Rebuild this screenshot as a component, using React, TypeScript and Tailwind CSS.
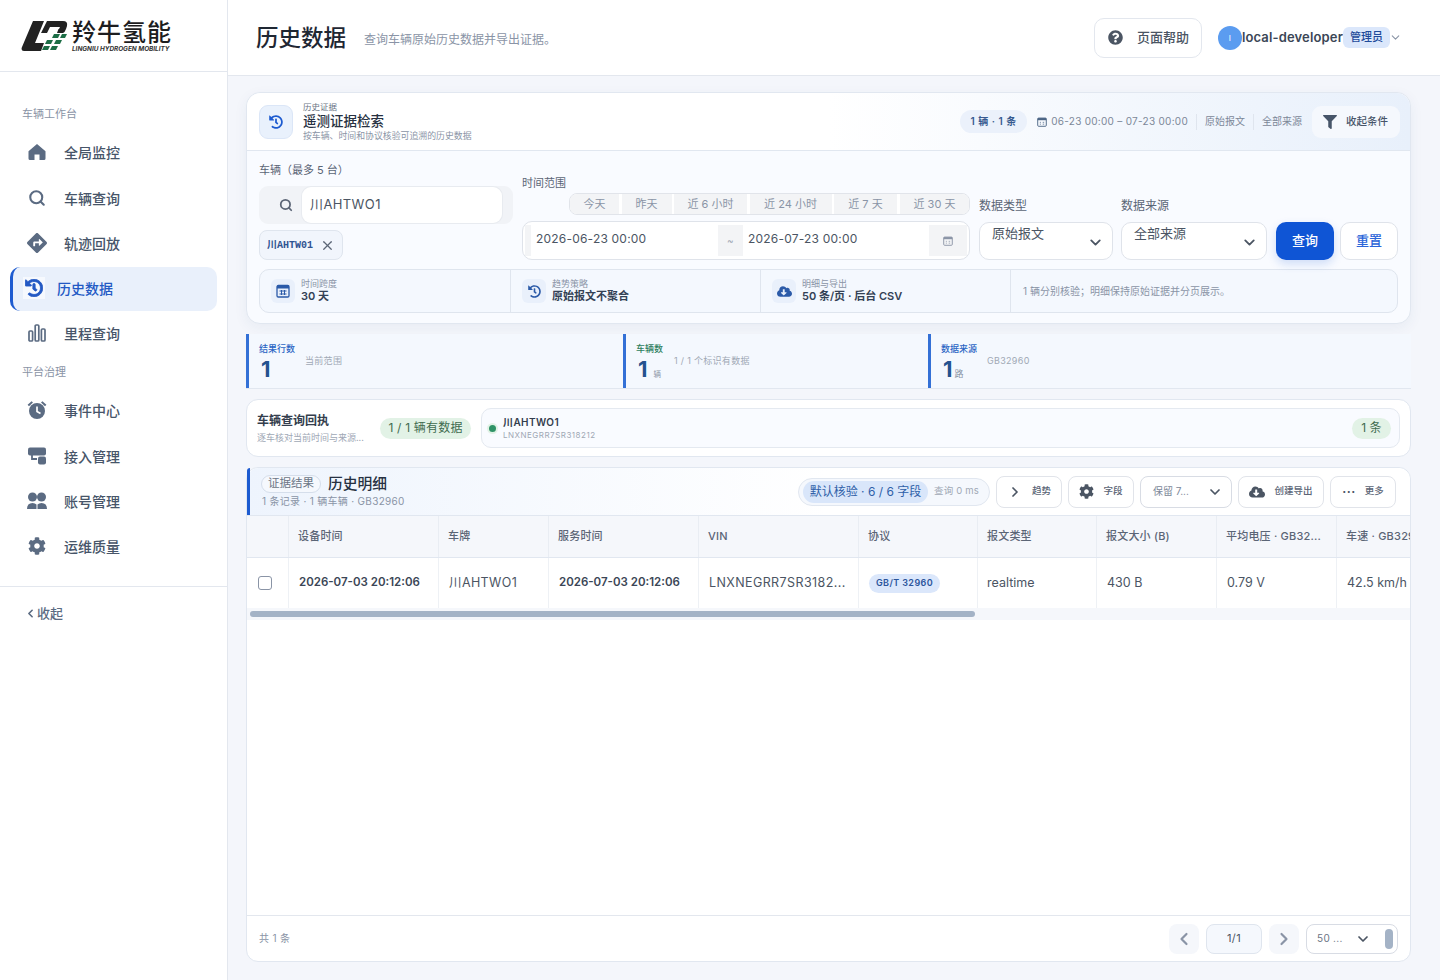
import {
  FaDirections,
  FaHistory,
  FaCog,
  FaQuestionCircle,
  FaFilter,
  FaCloudDownloadAlt,
} from "react-icons/fa";
import { FiChevronDown, FiChevronLeft, FiChevronRight, FiX, FiSearch } from "react-icons/fi";
import type { ReactNode } from "react";

function HomeIcon() {
  return (
    <svg width="20" height="20" viewBox="0 0 20 20" fill="#5b6b82">
      <path d="M10 2 18.500 9.200V16.500a1.500 1.500 0 0 1-1.500 1.500H12.500V12.500h-5V18H3a1.500 1.500 0 0 1-1.500-1.500V9.200z" />
    </svg>
  );
}

function BarsIcon() {
  return (
    <svg width="18" height="18" viewBox="0 0 18 18" fill="none" stroke="#5b6b82" strokeWidth="1.7">
      <rect x="1" y="7" width="3.6" height="10" rx="1" />
      <rect x="7.2" y="1" width="3.6" height="16" rx="1" />
      <rect x="13.4" y="5" width="3.6" height="12" rx="1" />
    </svg>
  );
}

function AlarmIcon() {
  return (
    <svg width="20" height="20" viewBox="0 0 20 20" fill="#5b6b82">
      <circle cx="10" cy="11" r="8" />
      <path d="M0.600 4.800 4.600 1.200 6 2.600 2 6.200zM19.400 4.800 15.400 1.200 14 2.600 18 6.200z" />
      <path d="M10 6.500V11.500L13.500 13.500" fill="none" stroke="#fff" strokeWidth="1.7" />
    </svg>
  );
}

function AccessIcon() {
  return (
    <svg width="20" height="20" viewBox="0 0 20 20" fill="#5b6b82">
      <rect x="1" y="1.500" width="18" height="8" rx="2" />
      <path d="M5 9v4h5" fill="none" stroke="#5b6b82" strokeWidth="1.8" />
      <rect x="11" y="10.500" width="8" height="8" rx="2" />
    </svg>
  );
}

function PeopleIcon() {
  return (
    <svg width="20" height="18" viewBox="0 0 20 18" fill="#5b6b82">
      <circle cx="5.500" cy="5" r="4.500" />
      <circle cx="14.500" cy="5" r="4.500" />
      <path d="M0 17q0-6 5.500-6 2.500 0 4 1.500V17zM20 17q0-6-5.500-6-2.500 0-4 1.500V17z" />
    </svg>
  );
}

function CalendarIcon({ size, solid }: { size: number; solid?: boolean }) {
  return (
    <svg width={size} height={size} viewBox="0 0 14 14" fill="none" stroke="currentColor" strokeWidth="1.300">
      <rect x="1" y="1.500" width="12" height="11.500" rx="1.300" />
      <rect x="1" y="1.500" width="12" height="3" fill="currentColor" stroke="none" />
      {solid ? (
        <path d="M3.500 7h7M3.500 10h7M5.500 6v5M8.500 6v5" strokeWidth="1" />
      ) : (
        <path d="M4 7.500h1.500M8 7.500h2M4 10h1.500M8 10h2" strokeWidth="1" />
      )}
    </svg>
  );
}

function Logo() {
  return (
    <div className="flex items-center">
      <svg width="47" height="32" viewBox="0 0 47 32" className="shrink-0">
        <path d="M12 1h11L14 23h9l-3 8H3q-3.500 0-2-4z" fill="#222" />
        <path d="M26 1h16q5 0 4 5l-1 3q-1 3-3 4h-6l1.500-4h0.500l1-2H29l-3 6h-6z" fill="#222" />
        <path d="M33 14h6l-2 4h-6zM41 14h5l-2 4h-5zM26 20h6l-2 4h-6zM35 20h6l-2 4h-6zM23 26h6l-2 4h-6zM31 26h6l-2 4h-6z" fill="#1c6e46" />
      </svg>
      <div className="ml-[4px] flex flex-col">
        <span className="pt-[1px] text-[24px] leading-[26px] font-medium tracking-[1px] text-[#1d1d1f]">羚牛氢能</span>
        <span className="text-[6.400px] leading-[7px] font-bold whitespace-nowrap text-[#333] italic">LINGNIU HYDROGEN MOBILITY</span>
      </div>
    </div>
  );
}

const workbench = [
  { label: "全局监控", icon: <HomeIcon /> },
  { label: "车辆查询", icon: <FiSearch size={18} strokeWidth={2.8} /> },
  { label: "轨迹回放", icon: <FaDirections size={20} /> },
  { label: "历史数据", icon: <FaHistory size={18} stroke="currentColor" strokeWidth={24} />, active: true },
  { label: "里程查询", icon: <BarsIcon /> },
];

const governance = [
  { label: "事件中心", icon: <AlarmIcon /> },
  { label: "接入管理", icon: <AccessIcon /> },
  { label: "账号管理", icon: <PeopleIcon /> },
  { label: "运维质量", icon: <FaCog size={18} /> },
];

function NavItem({ label, icon, active }: { label: string; icon: ReactNode; active?: boolean }) {
  if (active) {
    return (
      <div className="mx-[10px] mt-[1px] mb-[-1px] flex h-[44px] items-center rounded-[10px] border-l-[3px] border-[#1d5bd0] bg-[#e9f0fb] pb-[2px] pl-[10px] text-[14px] font-medium text-[#2359c4]">
        <span className="flex h-[22px] w-[22px] items-center justify-center bg-[#f6f9fe]">{icon}</span>
        <span className="ml-[12px]">{label}</span>
      </div>
    );
  }
  return (
    <div className="flex h-[44px] items-center pl-[27px] text-[14px] font-medium text-[#475569]">
      <span className="flex w-[20px] justify-center text-[#5b6b82]">{icon}</span>
      <span className="ml-[17px]">{label}</span>
    </div>
  );
}

function Sidebar() {
  return (
    <aside className="flex h-[980px] w-[228px] shrink-0 flex-col border-r border-[#e3e7ee] bg-white">
      <div className="flex h-[72px] items-center border-b border-[#e3e7ee] pl-[21px]">
        <Logo />
      </div>
      <div className="pt-[34px]">
        <div className="pl-[22px] text-[11px] leading-[16px] text-[#8a94a6]">车辆工作台</div>
        <div className="mt-[8px] flex flex-col gap-[1px]">
          {workbench.map((item) => (
            <div key={item.label} className="first:mb-[1px]">
              <NavItem {...item} />
            </div>
          ))}
        </div>
        <div className="mt-[9px] pl-[22px] text-[11px] leading-[16px] text-[#8a94a6]">平台治理</div>
        <div className="mt-[8px] flex flex-col gap-[1px]">
          {governance.map((item) => (
            <div key={item.label} className="first:mb-[1px]">
              <NavItem {...item} />
            </div>
          ))}
        </div>
      </div>
      <div className="mt-[18px] flex h-[54px] items-center border-t border-[#e3e7ee] pl-[24px] text-[13px] font-medium text-[#5b6b82]">
        <FiChevronLeft size={13} strokeWidth={3} />
        <span>收起</span>
      </div>
    </aside>
  );
}

function Topbar() {
  return (
    <header className="flex h-[76px] items-center border-b border-[#e3e7ee] bg-white pr-[38px] pl-[28px]">
      <h1 className="text-[22.500px] leading-[30px] font-medium text-[#1f2733]">历史数据</h1>
      <p className="mt-[5px] ml-[18px] text-[12px] text-[#8a94a6]">查询车辆原始历史数据并导出证据。</p>
      <div className="ml-auto flex h-[40px] w-[108px] items-center rounded-[10px] border border-[#e3e7ee] pl-[13px] text-[13px] font-medium text-[#4b5563]">
        <FaQuestionCircle size={15} className="text-[#4b5563]" />
        <span className="ml-[14px] pt-[1px]">页面帮助</span>
      </div>
      <div className="ml-[16px] flex items-center">
        <span className="flex h-[24px] w-[24px] items-center justify-center rounded-full bg-[#5b9cf0] text-[8px] text-white">I</span>
        <span className="pt-[1px] text-[13px] font-semibold tracking-[0.15px] text-[#3b4656]">local-developer</span>
        <span className="flex h-[21px] w-[47px] items-center justify-center rounded-[6px] bg-[#dbe7fb] text-[11px] font-medium text-[#1e4a9a]">管理员</span>
        <FiChevronDown size={13} className="ml-[-1px] text-[#8a94a6]" />
      </div>
    </header>
  );
}

function FieldLabel({ children }: { children: ReactNode }) {
  return <div className="text-[11px] leading-[14px] text-[#5b6576]">{children}</div>;
}

function SelectBox({ value, width }: { value: string; width: string }) {
  return (
    <div className={`${width} relative h-[38px] rounded-[10px] border border-[#dfe3ea] bg-white pl-[12px] text-[13px] leading-[20px] text-[#4b5563]`}>
      {value}
      <FiChevronDown size={17} strokeWidth={2.6} className="absolute top-[11px] right-[8px] text-[#4b5563]" />
    </div>
  );
}

const presets = [
  { label: "今天", w: "w-[49px]" },
  { label: "昨天", w: "w-[50px]" },
  { label: "近 6 小时", w: "w-[73px]" },
  { label: "近 24 小时", w: "w-[82px]" },
  { label: "近 7 天", w: "w-[63px]" },
  { label: "近 30 天", w: "w-[70px]" },
];

function SummaryCell({ icon, label, value, width }: { icon: ReactNode; label: string; value: string; width: string }) {
  return (
    <div className={`${width} flex items-center border-r border-[#dfe5ee] pl-[11px]`}>
      <span className="flex h-[24px] w-[24px] items-center justify-center rounded-[6px] bg-[#e9f0fb] text-[#2b5aa8]">{icon}</span>
      <div className="mb-[2px] ml-[6px]">
        <div className="text-[9px] leading-[11px] text-[#8a94a6]">{label}</div>
        <div className="text-[11px] leading-[14px] font-semibold text-[#334155]">{value}</div>
      </div>
    </div>
  );
}

function SearchCard() {
  return (
    <section className="rounded-[14px] border border-[#e1e7f0] bg-[#f9fbff] shadow-[0_4px_14px_rgba(30,60,120,0.06)]">
      <div className="flex h-[58px] items-center rounded-t-[14px] border-b border-[#e1e7f0] bg-gradient-to-r from-white via-white to-[#e8f0fb] pr-[10px] pl-[12px]">
        <span className="flex h-[34px] w-[34px] items-center justify-center rounded-[9px] border border-[#dbe6f7] bg-[#e9f1fc] text-[#1d5bd0]">
          <FaHistory size={14} />
        </span>
        <div className="ml-[10px]">
          <div className="text-[8.500px] leading-[11px] text-[#6b7585]">历史证据</div>
          <div className="text-[13.500px] leading-[17px] font-medium text-[#273142]">遥测证据检索</div>
          <div className="text-[8.900px] leading-[11px] text-[#8a94a6]">按车辆、时间和协议核验可追溯的历史数据</div>
        </div>
        <div className="ml-auto flex items-center text-[10px] text-[#7c8798]">
          <span className="flex h-[23px] w-[67px] items-center justify-center rounded-full bg-[#ebf1fb] font-semibold tracking-[0.5px] text-[#36598f]">1 辆 · 1 条</span>
          <span className="ml-[10px] text-[#4c6484]">
            <CalendarIcon size={10} />
          </span>
          <span className="ml-[4px] tracking-[0.28px]">06-23 00:00 – 07-23 00:00</span>
          <span className="mx-[8px] h-[16px] w-px bg-[#dfe5ee]" />
          <span>原始报文</span>
          <span className="mx-[8px] h-[16px] w-px bg-[#dfe5ee]" />
          <span>全部来源</span>
          <div className="ml-[10px] flex h-[32px] w-[88px] items-center rounded-[9px] bg-[#f5f8fd] pl-[11px] text-[10.500px] font-medium text-[#475569]">
            <FaFilter size={14} className="text-[#475569]" />
            <span className="ml-[9px]">收起条件</span>
          </div>
        </div>
      </div>

      <div className="px-[12px] pt-[12px] pb-[10px]">
        <div className="flex items-end gap-[9px]">
          <div className="w-[254px]">
            <FieldLabel>车辆（最多 5 台）</FieldLabel>
            <div className="mt-[9px] flex h-[38px] items-center rounded-[9px] bg-[#f1f3f7] pr-[11px] pl-[20px]">
              <FiSearch size={14} strokeWidth={3} className="text-[#5b6576]" />
              <div className="ml-[9px] flex h-[36px] flex-1 items-center rounded-[9px] bg-white pl-[8px] text-[13px] tracking-[0.4px] text-[#4b5563] shadow-[0_0_0_1px_#e8ebf0]">川AHTWO1</div>
            </div>
            <div className="mt-[6px] flex h-[30px] w-[84px] items-center rounded-[8px] border border-[#dfe5ee] bg-[#f1f5fc] pl-[7px] text-[10px] font-semibold text-[#2f5391]">
              <span className="font-['Liberation_Mono','Noto_Sans_CJK_SC',monospace]">川AHTW01</span>
              <FiX size={15} strokeWidth={2} className="ml-[7px] text-[#5b6576]" />
            </div>
          </div>

          <div className="w-[448px]">
            <FieldLabel>时间范围</FieldLabel>
            <div className="mt-[3px] ml-[47px] flex h-[22px] w-[401px] gap-[2.500px] overflow-hidden rounded-[8px] border border-[#e1e4ea] bg-white">
              {presets.map((p) => (
                <span key={p.label} className={`${p.w} flex shrink-0 items-center justify-center bg-[#f3f4f6] text-[11px] text-[#8a94a6]`}>
                  {p.label}
                </span>
              ))}
            </div>
            <div className="mt-[6px] flex h-[39px] items-center overflow-hidden rounded-[10px] border border-[#dfe3ea] bg-white pl-[2px] text-[12px] tracking-[0.2px] text-[#4b5563]">
              <span className="h-[31px] w-[6px] bg-[#f3f4f6]" />
              <span className="mb-[3px] ml-[5px] w-[182px]">2026-06-23 00:00</span>
              <span className="flex h-[31px] w-[25px] items-center justify-center bg-[#f3f4f6] text-[10px] text-[#a0a8b5]">~</span>
              <span className="mb-[3px] ml-[5px] flex-1">2026-07-23 00:00</span>
              <span className="mr-[2px] flex h-[31px] w-[38px] items-center justify-center bg-[#f3f4f6] text-[#8a94a6]">
                <CalendarIcon size={10} />
              </span>
            </div>
          </div>

          <div className="w-[134px]">
            <div className="text-[12px] leading-[14px] text-[#5b6576]">数据类型</div>
            <div className="mt-[9px]">
              <SelectBox value="原始报文" width="w-[134px]" />
            </div>
          </div>

          <div className="ml-[-1px] w-[146px]">
            <div className="text-[12px] leading-[14px] text-[#5b6576]">数据来源</div>
            <div className="mt-[9px]">
              <SelectBox value="全部来源" width="w-[146px]" />
            </div>
          </div>

          <button className="h-[38px] w-[58px] rounded-[10px] bg-[#0f55d5] text-[13px] font-medium text-white shadow-[0_4px_10px_rgba(15,85,213,0.18)]">查询</button>
          <button className="ml-[-3px] h-[38px] w-[58px] rounded-[10px] border border-[#dfe3ea] bg-white text-[13px] font-medium text-[#2b65d9]">重置</button>
        </div>

        <div className="mt-[9px] flex h-[44px] w-full rounded-[10px] border border-[#dfe5ee] bg-[#f4f8fe]">
          <SummaryCell width="w-[251px]" icon={<CalendarIcon size={14} solid />} label="时间跨度" value="30 天" />
          <SummaryCell width="w-[250px]" icon={<FaHistory size={13} />} label="趋势策略" value="原始报文不聚合" />
          <SummaryCell width="w-[250px]" icon={<FaCloudDownloadAlt size={15} />} label="明细与导出" value="50 条/页 · 后台 CSV" />
          <div className="flex items-center pl-[12px] text-[10px] text-[#8a94a6]">1 辆分别核验；明细保持原始证据并分页展示。</div>
        </div>
      </div>
    </section>
  );
}

function StatCell({
  width,
  label,
  labelColor,
  value,
  unit,
  unitClass,
  note,
  noteGap,
}: {
  width: string;
  label: string;
  labelColor: string;
  value: string;
  unit?: string;
  unitClass?: string;
  note: string;
  noteGap: string;
}) {
  return (
    <div className={`${width} flex h-[54px] border-l-[3px] border-[#3370d6] pt-[9px] pl-[10px]`}>
      <div>
        <div className={`text-[9px] leading-[12px] font-medium ${labelColor}`}>{label}</div>
        <div className="mt-[2px] flex items-baseline pl-[2px]">
          <span className="text-[22px] leading-[24px] font-bold text-[#24528f]">{value}</span>
          {unit && <span className={`${unitClass} text-[#8a94a6]`}>{unit}</span>}
        </div>
      </div>
      <div className={`${noteGap} pt-[12px] text-[9px] leading-[12px] tracking-[0.3px] text-[#a0a8b5]`}>{note}</div>
    </div>
  );
}

function StatsStrip() {
  return (
    <div className="mt-[10px] flex h-[55px] border-b border-[#e1e7f0] bg-[#f4f8fe]">
      <StatCell width="w-[377px]" label="结果行数" labelColor="text-[#2b65c4]" value="1" note="当前范围" noteGap="ml-[10px]" />
      <StatCell width="w-[305px]" label="车辆数" labelColor="text-[#2f8060]" value="1" unit="辆" unitClass="ml-[6px] text-[7.500px]" note="1 / 1 个标识有数据" noteGap="ml-[11px]" />
      <StatCell width="flex-1" label="数据来源" labelColor="text-[#2b65c4]" value="1" unit="路" unitClass="ml-[2px] text-[9px]" note="GB32960" noteGap="ml-[10px]" />
    </div>
  );
}

function Receipt() {
  return (
    <div className="mt-[10px] flex h-[58px] items-center rounded-[12px] border border-[#e1e7f0] bg-white pr-[10px] pl-[10px]">
      <div className="w-[123px]">
        <div className="text-[12px] leading-[16px] font-semibold text-[#333d4d]">车辆查询回执</div>
        <div className="mt-[2px] truncate text-[9px] leading-[13px] text-[#a0a8b5]">逐车核对当前时间与来源...</div>
      </div>
      <span className="flex h-[21px] w-[91px] items-center justify-center rounded-full bg-[#e2f2e6] text-[12px] tracking-[0.2px] text-[#3f6b4f]">1 / 1 辆有数据</span>
      <div className="ml-[10px] flex h-[40px] flex-1 items-center rounded-[10px] border border-[#e4e9f0] bg-[#f9fbff] pr-[8px] pl-[7px]">
        <span className="h-[7px] w-[7px] rounded-full bg-[#2f9367] shadow-[0_0_0_2px_#e2f2e6]" />
        <div className="mb-[1px] ml-[7px]">
          <div className="text-[10px] leading-[13px] font-semibold tracking-[0.4px] text-[#333d4d]">川AHTWO1</div>
          <div className="mt-[1px] text-[8px] leading-[10px] tracking-[0.5px] text-[#a0a8b5]">LNXNEGRR7SR318212</div>
        </div>
        <span className="ml-auto flex h-[21px] w-[39px] items-center justify-center rounded-full bg-[#e2f2e6] text-[12px] text-[#3f6b4f]">1 条</span>
      </div>
    </div>
  );
}

function ToolButton({ icon, label, width }: { icon: ReactNode; label: string; width: string }) {
  return (
    <div className={`${width} flex h-[32px] items-center justify-center gap-[9px] rounded-[8px] border border-[#e1e4ea] bg-white text-[9.500px] font-medium text-[#5b6576]`}>
      {icon}
      <span>{label}</span>
    </div>
  );
}

const columns = [
  { label: "设备时间", w: "w-[150px]" },
  { label: "车牌", w: "w-[110px]" },
  { label: "服务时间", w: "w-[150px]" },
  { label: "VIN", w: "w-[160px]" },
  { label: "协议", w: "w-[119px]" },
  { label: "报文类型", w: "w-[119px]" },
  { label: "报文大小 (B)", w: "w-[120px]" },
  { label: "平均电压 · GB32...", w: "w-[120px]" },
  { label: "车速 · GB32960", w: "w-[120px]" },
];

function DetailTable() {
  return (
    <section className="mt-[10px] flex h-[495px] flex-col rounded-[12px] border border-[#e1e7f0] bg-white">
      <div className="flex h-[48px] shrink-0 items-center rounded-t-[12px] border-b border-[#e1e7f0] bg-gradient-to-r from-[#eef4fd] via-white to-white pr-[14px]">
        <div className="h-[47px] w-[3px] rounded-tl-[12px] bg-[#1d5bd0]" />
        <div className="mb-[2px] ml-[11px]">
          <div className="flex items-center">
            <span className="flex h-[18px] w-[60px] items-center justify-center rounded-full border border-[#d5deeb] bg-[#f5f8fd] text-[11.500px] text-[#6b7585]">证据结果</span>
            <span className="ml-[7px] text-[14.750px] leading-[20px] font-medium text-[#273142]">历史明细</span>
          </div>
          <div className="mt-[1px] pl-[1px] text-[10px] leading-[13px] tracking-[0.3px] text-[#8a94a6]">1 条记录 · 1 辆车辆 · GB32960</div>
        </div>
        <div className="ml-auto flex items-center gap-[6px]">
          <div className="flex h-[28px] w-[192px] items-center rounded-full border border-[#e1e7f0] bg-[#f5f8fd] pl-[4px]">
            <span className="flex h-[22px] w-[125px] items-center justify-center rounded-full bg-[#d9e6fa] text-[12px] text-[#2f5fa8]">默认核验 · 6 / 6 字段</span>
            <span className="ml-[6px] text-[9.500px] tracking-[0.2px] text-[#a0a8b5]">查询 0 ms</span>
          </div>
          <ToolButton width="w-[66px]" icon={<FiChevronRight size={16} strokeWidth={2.6} className="text-[#4b5563]" />} label="趋势" />
          <ToolButton width="w-[66px]" icon={<FaCog size={15} className="text-[#4b5563]" />} label="字段" />
          <div className="flex h-[32px] w-[92px] items-center rounded-[8px] border border-[#d8dce4] bg-white pl-[12px] text-[10px] text-[#7c8798]">
            保留 7...
            <FiChevronDown size={16} strokeWidth={2.6} className="mr-[8px] ml-auto text-[#4b5563]" />
          </div>
          <ToolButton width="w-[86px]" icon={<FaCloudDownloadAlt size={16} className="text-[#4b5563]" />} label="创建导出" />
          <ToolButton width="w-[66px]" icon={<span className="text-[12px] leading-none font-bold tracking-[0.5px] text-[#4b5563]">···</span>} label="更多" />
        </div>
      </div>

      <div className="shrink-0 overflow-hidden">
        <div className="flex h-[42px] w-[1300px] border-b border-[#e1e7f0] bg-[#f5f7fb] text-[11px] font-medium tracking-[0.2px] text-[#5b6576]">
          <div className="w-[42px] border-r border-[#e9edf3]" />
          {columns.map((c) => (
            <div key={c.label} className={`${c.w} flex items-center border-r border-[#e9edf3] pl-[9px] whitespace-nowrap`}>
              {c.label}
            </div>
          ))}
        </div>
        <div className="flex h-[50px] w-[1300px] text-[12.500px] text-[#4b5563]">
          <div className="flex w-[42px] items-center justify-center border-r border-[#eef1f5]">
            <span className="mr-[5px] h-[14px] w-[14px] rounded-[3px] border border-[#8a94a6] bg-white" />
          </div>
          <div className="flex w-[150px] items-center border-r border-[#eef1f5] pl-[10px] text-[11.500px] font-semibold text-[#3b4656]">2026-07-03 20:12:06</div>
          <div className="flex w-[110px] items-center border-r border-[#eef1f5] pl-[10px] tracking-[0.4px]">川AHTWO1</div>
          <div className="flex w-[150px] items-center border-r border-[#eef1f5] pl-[10px] text-[11.500px] font-semibold text-[#3b4656]">2026-07-03 20:12:06</div>
          <div className="flex w-[160px] items-center border-r border-[#eef1f5] pl-[10px] tracking-[0.4px]">LNXNEGRR7SR3182...</div>
          <div className="flex w-[119px] items-center border-r border-[#eef1f5] pl-[10px]">
            <span className="flex h-[19px] w-[71px] items-center justify-center rounded-full bg-[#dbe7fb] text-[9px] font-semibold tracking-[0.4px] text-[#2b559c]">GB/T 32960</span>
          </div>
          <div className="flex w-[119px] items-center border-r border-[#eef1f5] pl-[9px]">realtime</div>
          <div className="flex w-[120px] items-center border-r border-[#eef1f5] pl-[10px]">430 B</div>
          <div className="flex w-[120px] items-center border-r border-[#eef1f5] pl-[10px]">0.79 V</div>
          <div className="flex w-[120px] items-center pl-[10px]">42.5 km/h</div>
        </div>
        <div className="flex h-[12px] items-center bg-[#f5f7fb] pl-[3px]">
          <div className="h-[6px] w-[725px] rounded-full bg-[#a4b3c6]" />
        </div>
      </div>

      <div className="flex-1" />

      <div className="flex h-[46px] shrink-0 items-center border-t border-[#e3e7ee] pr-[12px] pl-[12px] text-[10px] tracking-[0.3px] text-[#8a94a6]">
        共 1 条
        <div className="ml-auto flex items-center gap-[7px]">
          <span className="flex h-[30px] w-[30px] items-center justify-center rounded-[8px] bg-[#f5f7fb] text-[#8a94a6]">
            <FiChevronLeft size={20} strokeWidth={2.6} />
          </span>
          <span className="flex h-[30px] w-[56px] items-center justify-center rounded-[8px] border border-[#dfe5ee] bg-[#f5f8fd] text-[11px] text-[#4b5563]">1/1</span>
          <span className="flex h-[30px] w-[30px] items-center justify-center rounded-[8px] bg-[#f5f7fb] text-[#8a94a6]">
            <FiChevronRight size={20} strokeWidth={2.6} />
          </span>
          <div className="flex h-[30px] w-[92px] items-center rounded-[8px] border border-[#d8dce4] bg-white pl-[10px] text-[10px] text-[#6b7585]">
            50 ...
            <FiChevronDown size={16} strokeWidth={2.6} className="ml-auto text-[#4b5563]" />
            <span className="mr-[4px] ml-[14px] h-[20px] w-[8px] rounded-[4px] bg-[#a4b3c6]" />
          </div>
        </div>
      </div>
    </section>
  );
}

export default function App() {
  return (
    <div className="flex h-[980px] w-[1440px] overflow-hidden bg-[#f4f6fb] font-['Inter','Noto_Sans_CJK_SC',sans-serif]">
      <Sidebar />
      <div className="flex min-w-0 flex-1 flex-col">
        <Topbar />
        <main className="pt-[16px] pr-[29px] pl-[18px]">
          <SearchCard />
          <StatsStrip />
          <Receipt />
          <DetailTable />
        </main>
      </div>
    </div>
  );
}
